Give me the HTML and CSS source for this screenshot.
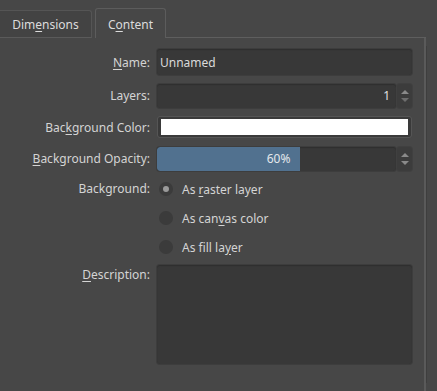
FILE: index.html
```html
<!DOCTYPE html>
<html>
<head>
<meta charset="utf-8">
<link rel="stylesheet" href="styles.css">
</head>
<body>
<div class="window">
  <div class="tabbar">
    <div class="tab"><span>Dim<u>e</u>nsions</span></div>
    <div class="tab active"><span>C<u>o</u>ntent</span></div>
    <div class="tabfill"></div>
  </div>
  <div class="panel">
    <div class="form">
      <label class="lbl"><u>N</u>ame:</label>
      <div class="field text">Unnamed</div>

      <label class="lbl">Layers:</label>
      <div class="spin">
        <div class="field num">1</div>
        <div class="arrows">
          <svg width="12" height="20" viewBox="0 0 12 20"><path d="M2 8 L6 4 L10 8 Z" fill="#8a8a8a"/><path d="M2 12 L6 16 L10 12 Z" fill="#6e6e6e"/></svg>
        </div>
      </div>

      <label class="lbl">Bac<u>k</u>ground Color:</label>
      <div class="field color"><div class="swatch"></div></div>

      <label class="lbl"><u>B</u>ackground Opacity:</label>
      <div class="spin">
        <div class="field slider"><div class="fill" style="width:60%"><span>60%</span></div></div>
        <div class="arrows">
          <svg width="12" height="20" viewBox="0 0 12 20"><path d="M2 8 L6 4 L10 8 Z" fill="#8a8a8a"/><path d="M2 12 L6 16 L10 12 Z" fill="#8a8a8a"/></svg>
        </div>
      </div>

      <label class="lbl top">Background:</label>
      <div class="radios">
        <div class="radio"><span class="dot on"></span><span>As <u>r</u>aster layer</span></div>
        <div class="radio"><span class="dot"></span><span>As can<u>v</u>as color</span></div>
        <div class="radio"><span class="dot"></span><span>As fill la<u>y</u>er</span></div>
      </div>

      <label class="lbl top"><u>D</u>escription:</label>
      <div class="field desc"></div>
    </div>
  </div>
</div>
</body>
</html>
```

FILE: styles.css
```css
html, body {
  margin: 0;
  padding: 0;
  background: #474747;
}
body {
  width: 437px;
  height: 391px;
  overflow: hidden;
  font-family: "Noto Sans", "Open Sans", sans-serif;
  font-size: 12px;
  color: #d6d6d6;
}
u { text-decoration: underline; text-underline-offset: 2px; }
.window {
  width: 437px;
  height: 391px;
  display: flex;
  flex-direction: column;
}
.tabbar {
  display: flex;
  align-items: flex-end;
  height: 38px;
  box-sizing: border-box;
  padding-right: 11px;
}
.tab {
  height: 28px;
  box-sizing: border-box;
  border: 1px solid #555;
  border-bottom: 1px solid #5a5a5a;
  border-left: none;
  background: #434343;
  display: flex;
  align-items: center;
  justify-content: center;
  width: 92px;
  color: #dcdcdc;
  border-radius: 0 3px 0 0;
}
.tab span { padding-top: 1px; }
.tab.active {
  margin-left: 3px;
  width: 71px;
  height: 30px;
  border: 1px solid #5c5c5c;
  border-bottom: none;
  background: #474747;
  border-radius: 3px 3px 0 0;
}
.tabfill {
  flex: 1;
  height: 1px;
  background: #5e5e5e;
  border-right: 2px solid #5e5e5e;
}
.panel {
  flex: 1;
  margin-right: 11px;
  border-right: 2px solid #5a5a5a;
  box-shadow: 9px 0 0 -8px #3e3e3e;
  padding-top: 11px;
}
.form {
  display: grid;
  grid-template-columns: 150px 255px;
  column-gap: 7px;
  row-gap: 8px;
  align-items: center;
}
.lbl {
  text-align: right;
  color: #d4d4d4;
  white-space: nowrap;
}
.lbl.top { align-self: start; padding-top: 1px; }
.field {
  background: #383838;
  border-radius: 3px;
  box-sizing: border-box;
  box-shadow: inset 0 1px 1px #2f2f2f, 0 0 0 1px #3d3d3d;
}
.text {
  height: 26px;
  display: flex;
  align-items: center;
  padding-left: 3px;
  color: #dadada;
}
.spin {
  display: flex;
  align-items: center;
  height: 25px;
  gap: 0;
}
.spin .field { flex: 1; height: 24px; }
.num {
  display: flex;
  align-items: center;
  justify-content: flex-end;
  padding-right: 6px;
  color: #e0e0e0;
}
.arrows {
  width: 15px;
  height: 24px;
  margin-left: 1px;
  background: #3c3c3c;
  border-radius: 3px;
  box-shadow: 0 0 0 1px #404040;
  display: flex;
  align-items: center;
  justify-content: center;
}
.arrows svg { display: block; }
.color {
  height: 22px;
  padding: 3px 4px 3px 4px;
  background: #3a3a3a;
  box-shadow: inset 0 0 0 1px #555;
}
.swatch {
  background: #ffffff;
  height: 16px;
}
.slider {
  overflow: hidden;
  display: flex;
}
.slider .fill {
  background: #51718f;
  height: 100%;
  display: flex;
  align-items: center;
  justify-content: flex-end;
  box-sizing: border-box;
  padding-right: 10px;
  color: #e4e8ec;
  border-radius: 3px 0 0 3px;
}
.radios {
  display: flex;
  flex-direction: column;
  gap: 9px;
  padding-top: 0px;
}
.radio {
  display: flex;
  align-items: center;
  height: 20px;
  gap: 9px;
  color: #d4d4d4;
}
.dot {
  width: 14px;
  height: 14px;
  border-radius: 50%;
  background: #3b3b3b;
  margin-left: 2px;
  position: relative;
}
.dot.on::after {
  content: "";
  position: absolute;
  left: 4px; top: 4px;
  width: 6px; height: 6px;
  border-radius: 50%;
  background: #9a9a9a;
}
.desc {
  height: 99px;
  background: #383838;
  margin-top: 0;
}
```
